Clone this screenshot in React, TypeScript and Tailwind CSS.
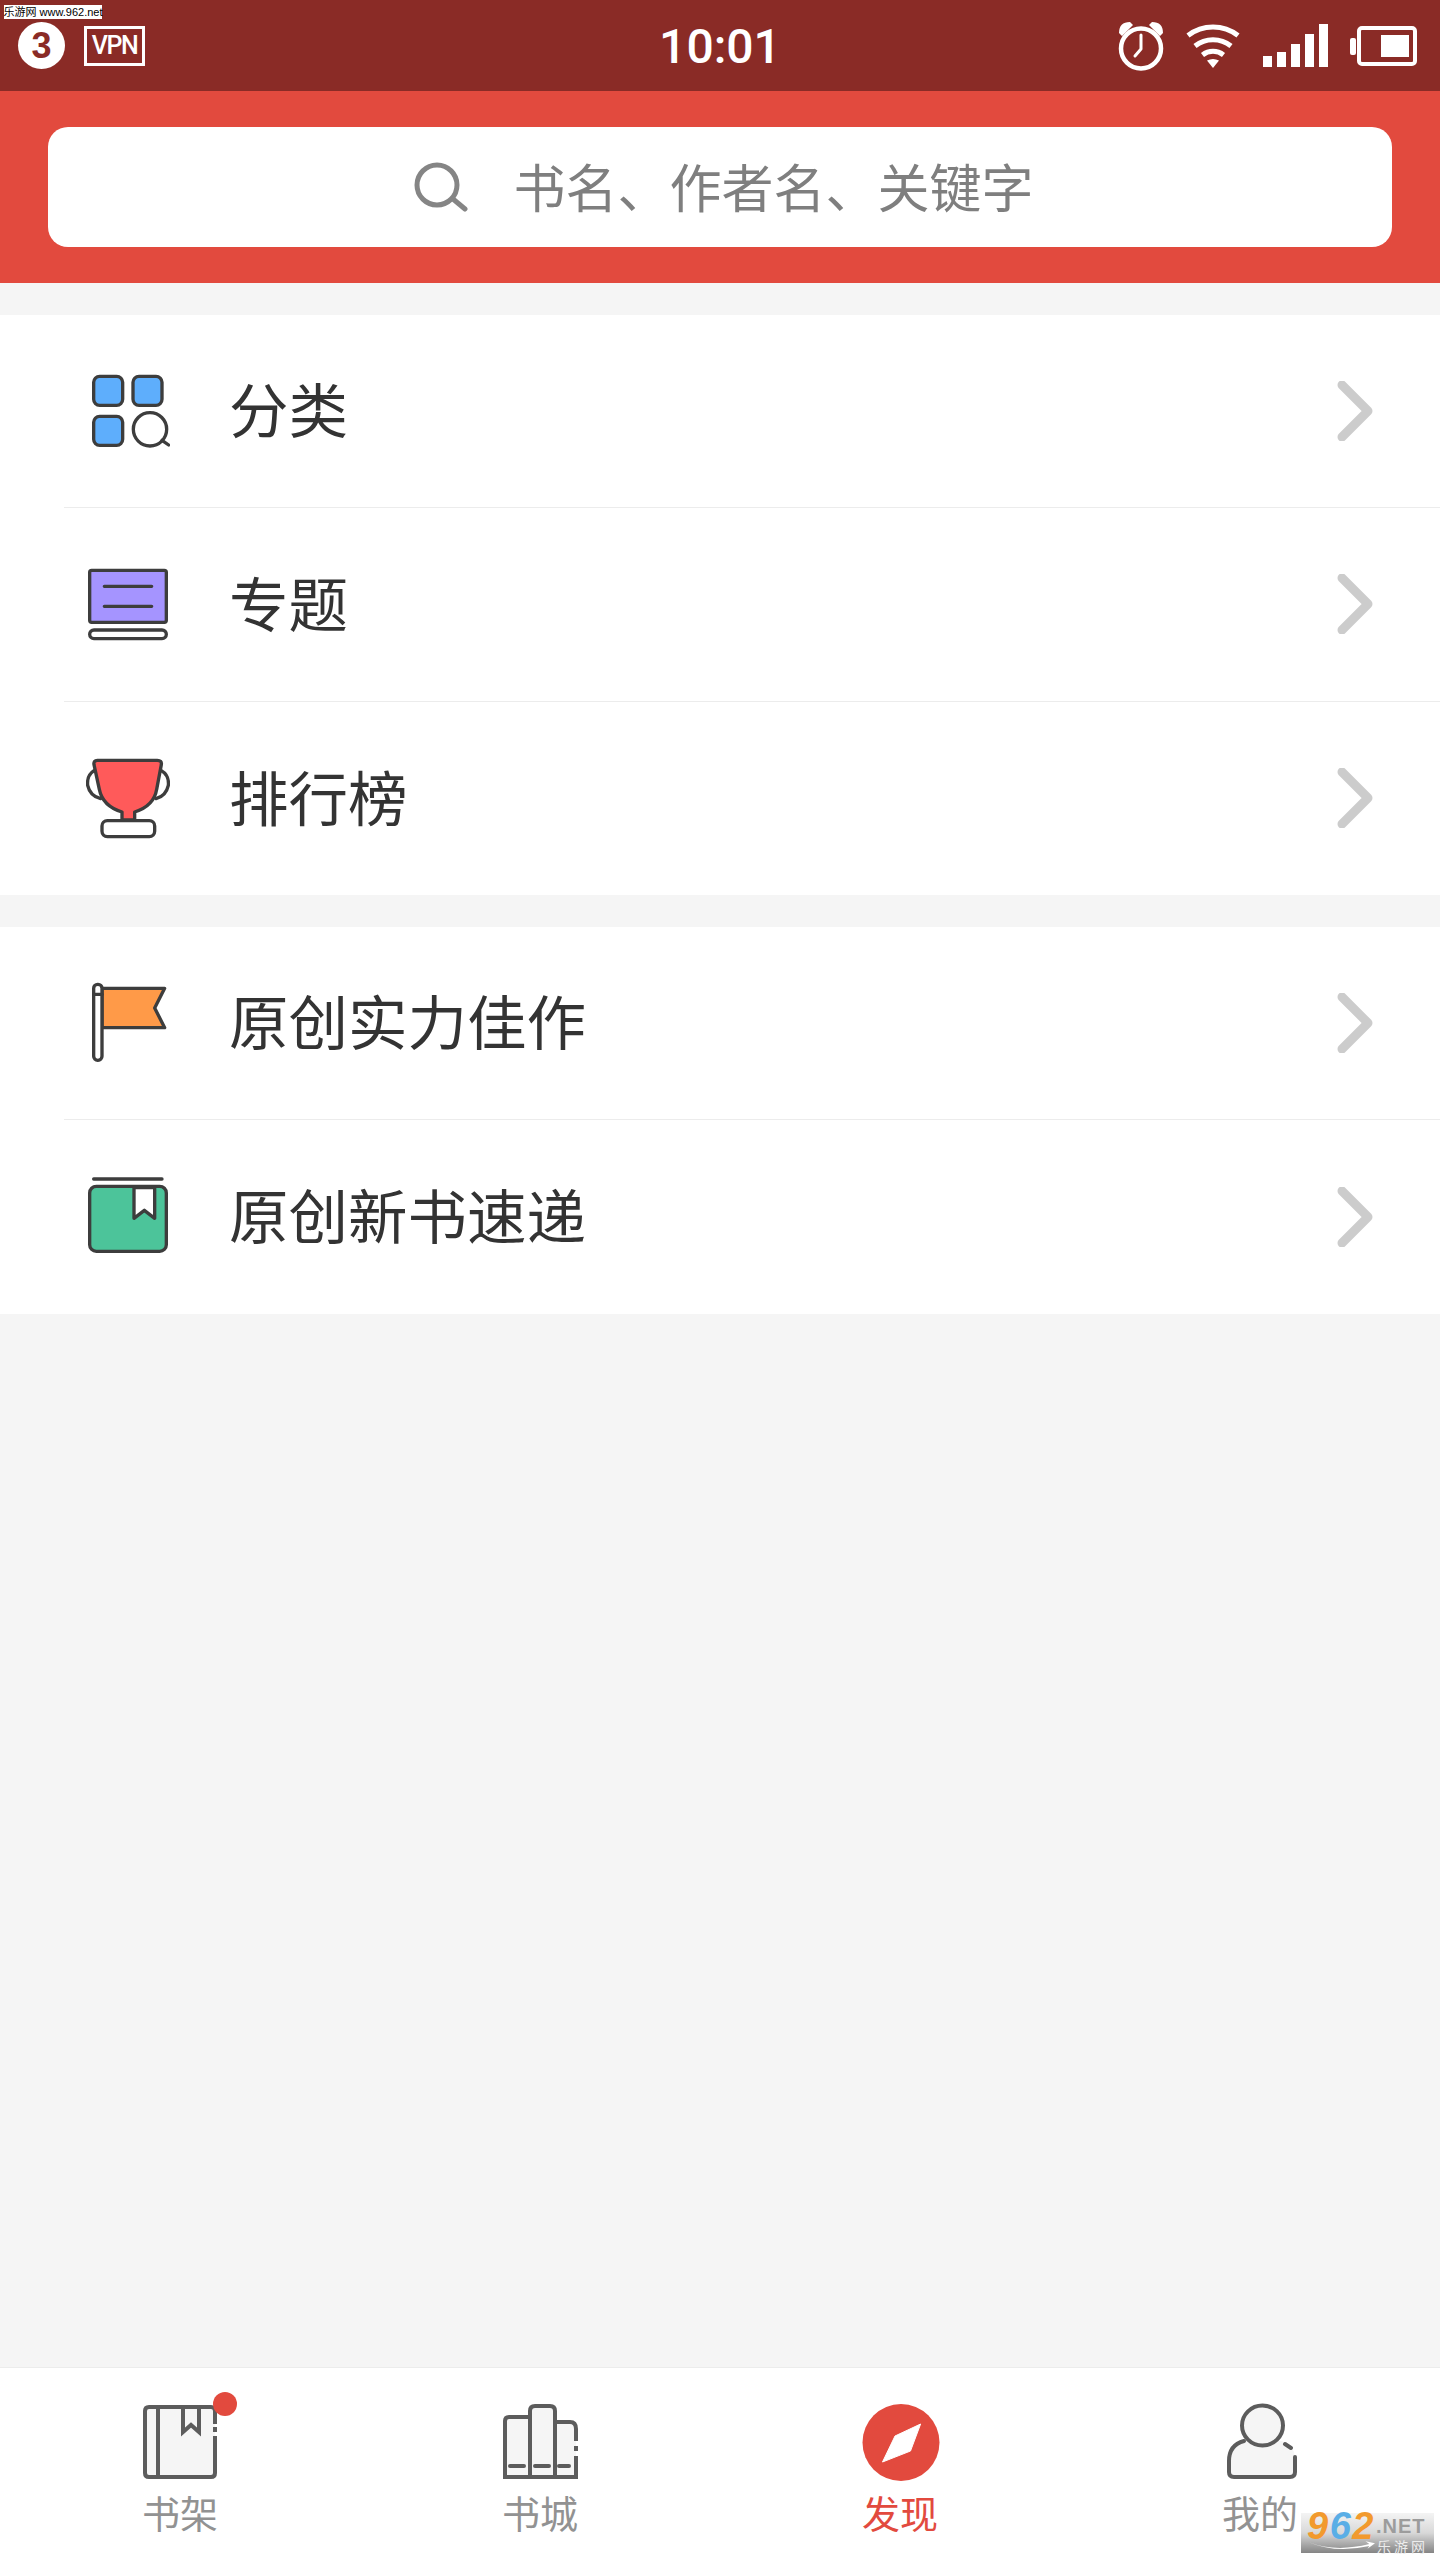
const rows = [
  [
    { label: '分类', icon: <CategoryIcon /> },
    { label: '专题', icon: <TopicIcon /> },
    { label: '排行榜', icon: <TrophyIcon /> },
  ],
  [
    { label: '原创实力佳作', icon: <FlagIcon /> },
    { label: '原创新书速递', icon: <NewBookIcon /> },
  ],
];

const STROKE = '#3d3d3d';

function IconBox({ children }: { children: React.ReactNode }) {
  return (
    <svg viewBox="0 0 252 252" className="h-[84px] w-[84px] shrink-0" fill="none" stroke={STROKE} strokeWidth="10" strokeLinejoin="round" strokeLinecap="round">
      {children}
    </svg>
  );
}

function CategoryIcon() {
  return (
    <IconBox>
      <rect x="23" y="22" width="87" height="87" rx="18" fill="#5eaefc" />
      <rect x="141" y="22" width="87" height="87" rx="18" fill="#5eaefc" />
      <rect x="23" y="142" width="87" height="87" rx="18" fill="#5eaefc" />
      <circle cx="192" cy="181" r="50" fill="#fff" />
      <path d="M228 214 L248 228" />
    </IconBox>
  );
}

function TopicIcon() {
  return (
    <IconBox>
      <rect x="11" y="25" width="230" height="156" rx="6" fill="#a594ff" />
      <path d="M55 73 H197 M55 133 H197" />
      <rect x="11" y="204" width="230" height="26" rx="13" fill="#fff" />
    </IconBox>
  );
}

function TrophyIcon() {
  return (
    <IconBox>
      <path d="M24 44 Q2 58 5 88 Q12 120 44 128" />
      <path d="M226 44 Q250 58 247 88 Q240 120 210 128" />
      <path d="M34 13 H214 Q228 13 226 26 L212 100 Q204 150 146 168 V192 H108 V168 Q50 150 40 100 L24 26 Q22 13 34 13 Z" fill="#ff5a5a" />
      <rect x="48" y="194" width="158" height="48" rx="16" fill="#fff" />
    </IconBox>
  );
}

function FlagIcon() {
  return (
    <IconBox>
      <path d="M48 22 H236 L206 81 L236 140 H48 Z" fill="#ff9a48" />
      <rect x="23" y="10" width="25" height="228" rx="12" fill="#fff" />
      <path d="M23 40 H48" />
    </IconBox>
  );
}

function NewBookIcon() {
  return (
    <IconBox>
      <path d="M23 12 H228" />
      <rect x="11" y="34" width="230" height="195" rx="20" fill="#4cc49a" />
      <path d="M144 38 V130 L175 106 L206 130 V38 Z" fill="#fff" />
    </IconBox>
  );
}

function Chevron() {
  return (
    <svg width="38" height="60" viewBox="0 0 38 60" fill="none" stroke="#cccccc" strokeWidth="9" strokeLinecap="round" strokeLinejoin="round" className="shrink-0">
      <path d="M6 4 L32 30 L6 56" />
    </svg>
  );
}

function StatusBar() {
  return (
    <div className="grid h-[91px] shrink-0 grid-cols-[1fr_auto_1fr] items-center bg-[#8a2b26] text-white">
      <div className="flex items-center pl-[18px]">
        <div className="flex h-[47px] w-[47px] items-center justify-center rounded-full bg-white font-['Liberation_Sans',sans-serif] text-[36px] font-bold text-[#8a2b26]">3</div>
        <div className="ml-[19px] flex h-[40px] w-[61px] items-center justify-center border-[3px] border-white font-['Roboto',sans-serif] text-[25px] font-medium tracking-[-1.5px]">VPN</div>
      </div>
      <div className="mt-[2px] font-['Roboto',sans-serif] text-[48px] font-medium leading-none">10:01</div>
      <div className="flex items-center justify-end pr-[23px]">
        <svg width="48" height="50" viewBox="0 0 48 50" fill="none" stroke="#fff">
          <circle cx="23" cy="27.5" r="20" strokeWidth="4.5" />
          <path d="M23 14 V28 L17 35" strokeWidth="3" strokeLinecap="round" strokeLinejoin="round" />
          <path d="M1 12 Q1 1 12 1 L15 4 L4 15 Z M45 12 Q45 1 34 1 L31 4 L42 15 Z" fill="#fff" stroke="none" />
        </svg>
        <svg width="54" height="44" viewBox="0 0 54 44" fill="none" stroke="#fff" strokeWidth="5" className="ml-[20px]">
          <path d="M2 11.5 A41 41 0 0 1 52 11.5" />
          <path d="M9 22 A29 29 0 0 1 45 22" />
          <path d="M16.5 31 A17 17 0 0 1 37.5 31" />
          <path d="M27 44 L21 36.5 Q27 33.5 33 36.5 Z" fill="#fff" stroke="none" />
        </svg>
        <div className="ml-[23px] flex h-[43px] items-end gap-[5px]">
          <div className="h-[11px] w-[9px] bg-white" />
          <div className="h-[15px] w-[9px] bg-white" />
          <div className="h-[23px] w-[9px] bg-white" />
          <div className="h-[33px] w-[9px] bg-white" />
          <div className="h-[43px] w-[9px] bg-white" />
        </div>
        <svg width="67" height="40" viewBox="0 0 67 40" className="ml-[22px]">
          <rect x="0" y="12" width="6" height="17" rx="2" fill="#fff" />
          <rect x="9" y="2" width="56" height="36" rx="3" fill="none" stroke="#fff" strokeWidth="4" />
          <rect x="31" y="9" width="28" height="22" fill="#fff" />
        </svg>
      </div>
    </div>
  );
}

function SearchHeader() {
  return (
    <div className="h-[192px] shrink-0 bg-[#e24a3e] px-[48px] py-[36px]">
      <div className="flex h-[120px] items-center justify-center rounded-[20px] bg-white">
        <svg width="54" height="50" viewBox="0 0 54 50" fill="none" stroke="#858585" strokeWidth="5" strokeLinecap="round" className="ml-[8px]">
          <circle cx="23" cy="23" r="20" />
          <path d="M39 37 L51 47" />
        </svg>
        <span className="-mt-[3px] ml-[45px] font-['Noto_Sans_CJK_SC',sans-serif] text-[52px] leading-none text-[#7f7f7f]">书名、作者名、关键字</span>
      </div>
    </div>
  );
}

function BookTab() {
  return (
    <svg width="100" height="92" viewBox="0 0 100 92" fill="none" stroke="#5c5c5c" strokeWidth="4" className="overflow-visible">
      <rect x="15" y="16" width="70" height="70" rx="4" fill="#f5f5f5" stroke="none" />
      <path d="M85 33 V20 Q85 16 81 16 H19 Q15 16 15 20 V82 Q15 86 19 86 H81 Q85 86 85 82 V45 M85 36 V41 M28 16 V86" />
      <path d="M53 16 V41 L61 34 L69 41 V16" />
      <circle cx="95" cy="13" r="12" fill="#e24a3e" stroke="none" />
    </svg>
  );
}

function ShelfTab() {
  return (
    <svg width="100" height="92" viewBox="0 0 100 92" fill="none" stroke="#5c5c5c" strokeWidth="4">
      <path d="M15 86 V30 Q15 26 19 26 H40 V20 Q40 15 45 15 H60 Q65 15 65 20 V31 H80 Q86 31 86 38 V86 Z" fill="#f5f5f5" stroke="none" />
      <path d="M15 86 V30 Q15 26 19 26 H40 M40 86 V20 Q40 15 45 15 H60 Q65 15 65 20 V86 M65 31 H80 Q86 31 86 38 V50 M86 55 V60 M86 65 V86 M13 86 H88" />
      <path d="M20 75 H34 M45 75 H59 M69 75 H79" strokeLinecap="round" />
    </svg>
  );
}

function CompassTab() {
  return (
    <svg width="100" height="92" viewBox="0 0 100 92">
      <circle cx="51" cy="51.5" r="38.5" fill="#e24a3e" />
      <path d="M70.6 33 L45 45 L32.5 71 L60.5 60 Z" fill="#fff" stroke="#fff" strokeWidth="1" strokeLinejoin="round" />
    </svg>
  );
}

function MeTab() {
  return (
    <svg width="100" height="92" viewBox="0 0 100 92" fill="none" stroke="#5c5c5c" strokeWidth="4" strokeLinecap="round">
      <path d="M34 50 Q19 54 19 70 V81 Q19 86 24 86 H81 Q85 86 85 81 V66 Q85 56 72 50 Z" fill="#f5f5f5" stroke="none" />
      <path d="M85 66 V81 Q85 86 80 86 H24 Q19 86 19 81 V70 Q19 54 34 50 M75 53 L81 57" />
      <ellipse cx="52.5" cy="34.5" rx="20.5" ry="20" fill="#f5f5f5" />
    </svg>
  );
}

const tabs = [
  { label: '书架', icon: <BookTab />, active: false },
  { label: '书城', icon: <ShelfTab />, active: false },
  { label: '发现', icon: <CompassTab />, active: true },
  { label: '我的', icon: <MeTab />, active: false },
];

function TabBar() {
  return (
    <div className="grid h-[193px] shrink-0 grid-cols-4 border-t border-[#ececec] bg-white">
      {tabs.map((tab) => (
        <div key={tab.label} className="flex flex-col items-center pt-[23px]">
          {tab.icon}
          <span className={`-mt-[3px] font-['Noto_Sans_CJK_SC',sans-serif] text-[38px] leading-[64px] ${tab.active ? 'text-[#e24a3e]' : 'text-[#929292]'}`}>{tab.label}</span>
        </div>
      ))}
    </div>
  );
}

export default function App() {
  return (
    <div className="relative flex h-[2560px] w-[1440px] flex-col overflow-hidden bg-[#f5f5f5]">
      <StatusBar />
      <SearchHeader />
      <main className="flex flex-1 flex-col gap-[32px] pt-[32px]">
        {rows.map((group, index) => (
          <div key={index} className="divide-y divide-[#ececec] bg-white pl-[64px]">
            {group.map((row) => (
              <div key={row.label} className="flex h-[193.33px] items-center pl-[22px] pr-[66px]">
                {row.icon}
                <span className="-mt-[6px] ml-[59px] flex-1 font-['Noto_Sans_CJK_SC',sans-serif] text-[59.5px] leading-none text-[#333333]">{row.label}</span>
                <Chevron />
              </div>
            ))}
          </div>
        ))}
      </main>
      <TabBar />

      <div className="absolute left-[4px] top-[5px] flex h-[14px] w-[98px] items-center justify-center whitespace-nowrap bg-white font-['Liberation_Sans','Noto_Sans_CJK_SC',sans-serif] text-[11px] leading-none text-black">乐游网 www.962.net</div>

      <div className="absolute bottom-[7px] right-[6px] flex h-[40px] w-[133px] flex-col bg-gradient-to-b from-[#f4f4f4] via-[#d8d8d8] to-[#858585] pl-[6px]">
        <div className="flex h-[26px] items-center font-['Liberation_Sans',sans-serif] text-[38px] font-bold italic leading-none tracking-[1.5px]">
          <span className="text-[#f29a2e]">9</span>
          <span className="text-[#5aaee6]">6</span>
          <span className="text-[#f29a2e]">2</span>
          <span className="ml-[1px] text-[20px] font-bold not-italic tracking-[1px] text-[#9c9c9c]">.NET</span>
        </div>
        <div className="flex h-[14px] items-center justify-between pr-[6px]">
          <svg width="68" height="12" viewBox="0 0 72 12" fill="none">
            <path d="M2 2 Q30 13 66 4 L62 1 L72 3 L64 9 L66 6 Q30 14 2 2 Z" fill="#fff" />
          </svg>
          <span className="font-['Noto_Sans_CJK_SC',sans-serif] text-[14px] leading-none tracking-[3px] text-[#ececec]">乐游网</span>
        </div>
      </div>
    </div>
  );
}
